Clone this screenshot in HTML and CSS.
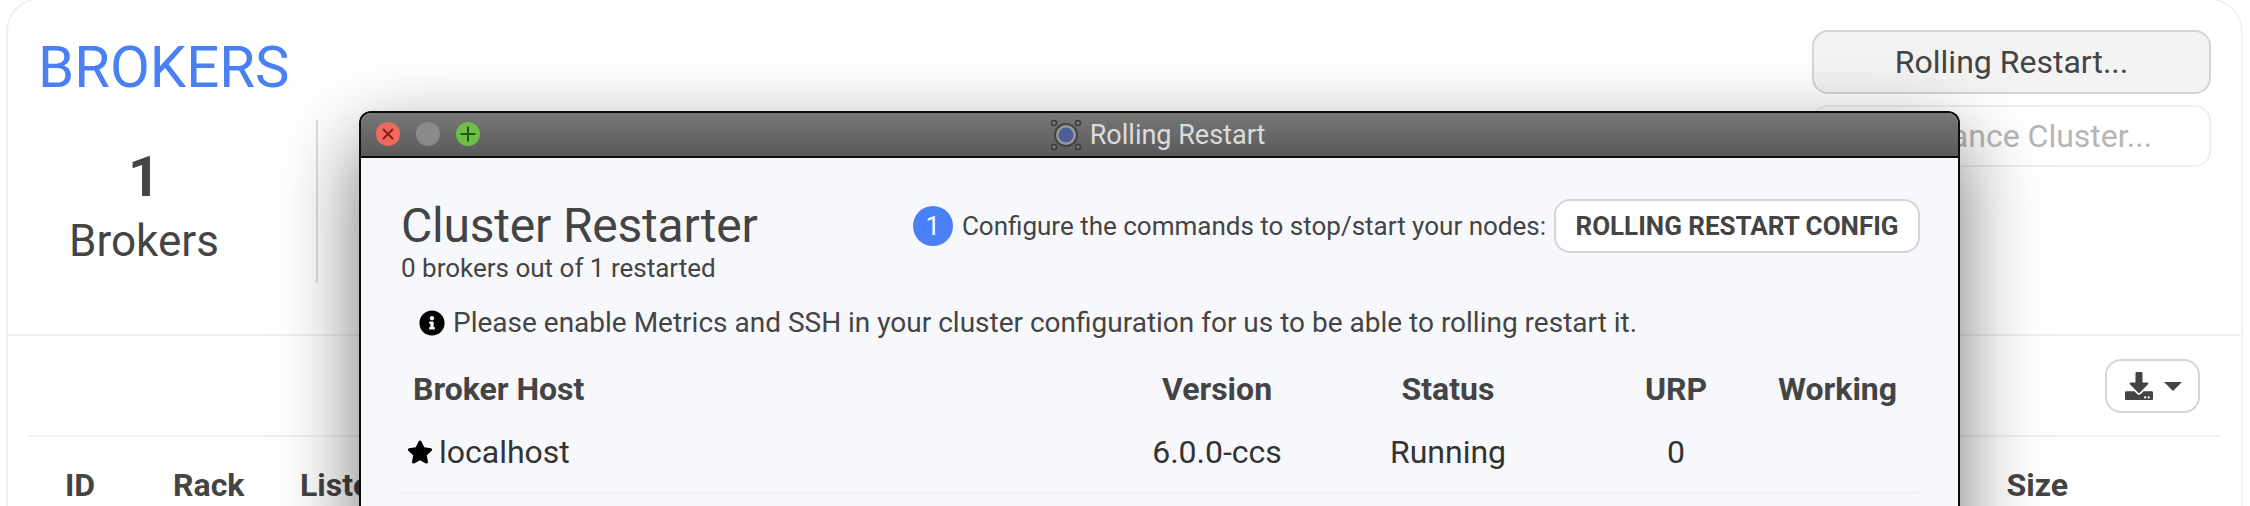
FILE: index.html

```html
<!DOCTYPE html>
<html lang="en">
<head>
    <meta charset="UTF-8">
    <title>Brokers</title>
    <link rel="stylesheet" href="styles.css">
</head>
<body>
    <div class="card">
        <div class="summary">
            <div>
                <h1 class="title">BROKERS</h1>
                <div class="stat">
                    <div class="stat-value">1</div>
                    <div class="stat-label">Brokers</div>
                </div>
            </div>
            <div class="actions">
                <button class="action">Rolling Restart...</button>
                <button class="action action-disabled">Rebalance Cluster...</button>
            </div>
        </div>
        <div class="table-section">
            <div class="toolbar">
                <button class="export">
                    <svg class="export-icon" viewBox="0 0 512 512"><path d="M216 0h80c13.3 0 24 10.7 24 24v168h87.7c17.8 0 26.7 21.5 14.1 34.1L269.7 378.3c-7.5 7.5-19.8 7.5-27.3 0L90.1 226.1c-12.6-12.6-3.7-34.1 14.1-34.1H192V24c0-13.3 10.7-24 24-24zm296 376v112c0 13.3-10.7 24-24 24H24c-13.3 0-24-10.7-24-24V376c0-13.3 10.7-24 24-24h146.7l49 49c20.1 20.1 52.5 20.1 72.6 0l49-49H488c13.3 0 24 10.7 24 24zm-124 88c0-11-9-20-20-20s-20 9-20 20 9 20 20 20 20-9 20-20zm64 0c0-11-9-20-20-20s-20 9-20 20 9 20 20 20 20-9 20-20z"/></svg>
                    <span class="caret"></span>
                </button>
            </div>
            <div class="table-head">
                <div class="col-id">ID</div>
                <div class="col-rack">Rack</div>
                <div class="col-listeners">Listeners</div>
                <div>Size</div>
            </div>
        </div>
    </div>

    <div class="window">
        <div class="titlebar">
            <div class="lights">
                <svg class="light" viewBox="0 0 24 24"><circle cx="12" cy="12" r="12" fill="#ee6a5f"/><path d="M7 7l10 10M17 7L7 17" stroke="#8e1b12" stroke-width="2"/></svg>
                <svg class="light" viewBox="0 0 24 24"><circle cx="12" cy="12" r="12" fill="#8a8a8a"/></svg>
                <svg class="light" viewBox="0 0 24 24"><circle cx="12" cy="12" r="12" fill="#6cc04a"/><path d="M12 4.500v15M4.500 12h15" stroke="#1f5a12" stroke-width="2"/></svg>
            </div>
            <div class="window-title">
                <svg class="app-icon" viewBox="0 0 32 32">
                    <circle cx="16" cy="16" r="12" fill="#444"/>
                    <circle cx="16" cy="16" r="10" fill="#9a9a9a"/>
                    <circle cx="16" cy="16" r="7.500" fill="#4d5f96"/>
                    <g fill="#7a7a7a" stroke="#3a3a3a" stroke-width="1.500">
                        <circle cx="4" cy="4" r="2.500"/>
                        <circle cx="28" cy="4" r="2.500"/>
                        <circle cx="4" cy="28" r="2.500"/>
                        <circle cx="28" cy="28" r="2.500"/>
                    </g>
                </svg>
                Rolling Restart
            </div>
        </div>
        <div class="window-body">
            <div class="restart-head">
                <div>
                    <h2 class="restart-title">Cluster Restarter</h2>
                    <div class="restart-sub">0 brokers out of 1 restarted</div>
                </div>
                <div class="step">
                    <span class="step-num">1</span>
                    <span class="step-text">Configure the commands to stop/start your nodes:</span>
                    <button class="config-btn">ROLLING RESTART CONFIG</button>
                </div>
            </div>
            <div class="notice">
                <svg class="notice-icon" viewBox="0 0 512 512"><path d="M256 8C119.043 8 8 119.083 8 256c0 136.997 111.043 248 248 248s248-111.003 248-248C504 119.083 392.957 8 256 8zm0 110c23.196 0 42 18.804 42 42s-18.804 42-42 42-42-18.804-42-42 18.804-42 42-42zm56 254c0 6.627-5.373 12-12 12h-88c-6.627 0-12-5.373-12-12v-24c0-6.627 5.373-12 12-12h12v-64h-12c-6.627 0-12-5.373-12-12v-24c0-6.627 5.373-12 12-12h64c6.627 0 12 5.373 12 12v100h12c6.627 0 12 5.373 12 12v24z"/></svg>
                Please enable Metrics and SSH in your cluster configuration for us to be able to rolling restart it.
            </div>
            <div class="nodes nodes-head">
                <div class="host-head">Broker Host</div>
                <div>Version</div>
                <div>Status</div>
                <div>URP</div>
                <div>Working</div>
            </div>
            <div class="nodes nodes-row">
                <div class="host-cell">
                    <svg class="star" viewBox="0 0 576 512"><path d="M259.3 17.8L194 150.2 47.9 171.5c-26.2 3.8-36.7 36.1-17.7 54.6l105.7 103-25 145.5c-4.5 26.3 23.2 46 46.4 33.7L288 439.6l130.7 68.7c23.2 12.2 50.9-7.4 46.4-33.7l-25-145.5 105.7-103c19-18.5 8.5-50.8-17.7-54.6L382 150.2 316.7 17.8c-11.7-23.6-45.6-23.9-57.4 0z"/></svg>
                    localhost
                </div>
                <div>6.0.0-ccs</div>
                <div>Running</div>
                <div>0</div>
                <div></div>
            </div>
        </div>
    </div>
</body>
</html>
```

FILE: styles.css

```css
html, body {
    height: 506px;
    overflow: hidden;
}
body {
    font-family: Roboto, sans-serif;
    background-color: #fff;
    margin: 0;
    color: #444;
}
button {
    font-family: inherit;
}

/* page behind the window */
.card {
    margin: -2px 7px 0 6px;
    height: 600px;
    box-sizing: border-box;
    border: 2px solid #f0f0f0;
    border-radius: 34px;
}
.summary {
    display: flex;
    justify-content: space-between;
    height: 336px;
    box-sizing: border-box;
    padding: 30px 30px 0;
    border-bottom: 2px solid #f0f0f0;
}
.title {
    margin: 4px 0 20px;
    font-size: 58px;
    line-height: 66px;
    font-weight: 400;
    color: #4a80f5;
}
.stat {
    width: 212px;
    height: 163px;
    box-sizing: content-box;
    padding-right: 66px;
    border-right: 2px solid #ddd;
    text-align: center;
}
.stat-value {
    padding-top: 25px;
    font-size: 56px;
    line-height: 64px;
    font-weight: 700;
}
.stat-label {
    margin-top: 7px;
    font-size: 44px;
    line-height: 50px;
}
.actions {
    display: flex;
    flex-direction: column;
    gap: 11px;
    width: 399px;
}
.action {
    height: 64px;
    background: #f3f3f3;
    border: 2px solid #d4d4d4;
    border-radius: 16px;
    font-size: 32px;
    color: #444;
}
.action-disabled {
    height: 62px;
    background: #fff;
    border-color: #eee;
    color: #b5b5b5;
}
.table-section {
    margin: 0 20px;
}
.toolbar {
    display: flex;
    justify-content: flex-end;
    padding: 23px 21px 22px;
    border-bottom: 2px solid #f0f0f0;
}
.export {
    display: flex;
    align-items: center;
    justify-content: center;
    gap: 10px;
    width: 95px;
    height: 54px;
    padding: 0;
    background: #fff;
    border: 2px solid #d4d4d4;
    border-radius: 16px;
}
.export-icon {
    width: 30px;
    height: 28px;
    fill: #444;
}
.caret {
    border-left: 9px solid transparent;
    border-right: 9px solid transparent;
    border-top: 9px solid #444;
}
.table-head {
    display: flex;
    padding: 30px 153px 0 37px;
    font-size: 32px;
    line-height: 36px;
    font-weight: 700;
}
.col-id {
    width: 108px;
}
.col-rack {
    width: 127px;
}
.col-listeners {
    flex: 1;
}

/* floating window */
.window {
    position: absolute;
    left: 359px;
    top: 111px;
    width: 1601px;
    height: 440px;
    box-sizing: border-box;
    border: 2px solid #0c0c0c;
    border-bottom: 0;
    border-radius: 12px 12px 0 0;
    background: #f7f8fc;
    box-shadow: 0 30px 80px rgba(0,0,0,0.55);
}
.titlebar {
    display: flex;
    align-items: center;
    justify-content: center;
    position: relative;
    height: 43px;
    border-radius: 10px 10px 0 0;
    border-bottom: 2px solid #0c0c0c;
    background: linear-gradient(#777, #5a5a5a);
}
.lights {
    position: absolute;
    left: 15px;
    top: 9px;
    display: flex;
    gap: 16px;
}
.light {
    width: 24px;
    height: 24px;
}
.window-title {
    display: flex;
    align-items: center;
    gap: 8px;
    margin-right: 4px;
    font-size: 27px;
    color: #dcdcdc;
}
.app-icon {
    width: 32px;
    height: 32px;
}
.window-body {
    padding: 40px 38px 0 40px;
}
.restart-head {
    display: flex;
    justify-content: space-between;
}
.restart-title {
    margin: 0;
    font-size: 48px;
    line-height: 55px;
    font-weight: 400;
    letter-spacing: -0.2px;
}
.restart-sub {
    font-size: 26px;
    line-height: 30px;
}
.step {
    display: flex;
    align-items: center;
    height: 54px;
    margin-top: 1px;
}
.step-num {
    display: flex;
    align-items: center;
    justify-content: center;
    width: 40px;
    height: 40px;
    border-radius: 50%;
    background: #4a80f5;
    color: #fff;
    font-size: 26px;
}
.step-text {
    margin: 0 8px 0 9px;
    font-size: 26px;
}
.config-btn {
    width: 366px;
    height: 54px;
    padding: 0;
    background: #fff;
    border: 2px solid #d4d4d4;
    border-radius: 16px;
    font-size: 26px;
    font-weight: 700;
    color: #444;
}
.notice {
    display: flex;
    align-items: center;
    gap: 8px;
    margin-top: 22px;
    padding-left: 18px;
    font-size: 28px;
    line-height: 36px;
}
.notice-icon {
    width: 26px;
    height: 26px;
    flex-shrink: 0;
}
.nodes {
    display: grid;
    grid-template-columns: 711px 210px 252px 204px 119px;
    font-size: 32px;
    line-height: 36px;
    text-align: center;
}
.nodes-head {
    margin-top: 30px;
    font-weight: 700;
}
.host-head {
    padding-left: 12px;
    text-align: left;
}
.nodes-row {
    margin-top: 27px;
    margin-right: 2px;
    padding-bottom: 22px;
    border-bottom: 2px solid #f0f0f0;
    color: #333;
}
.host-cell {
    display: flex;
    align-items: center;
    gap: 6px;
    padding-left: 6px;
}
.star {
    width: 26px;
    height: 24px;
}
```
